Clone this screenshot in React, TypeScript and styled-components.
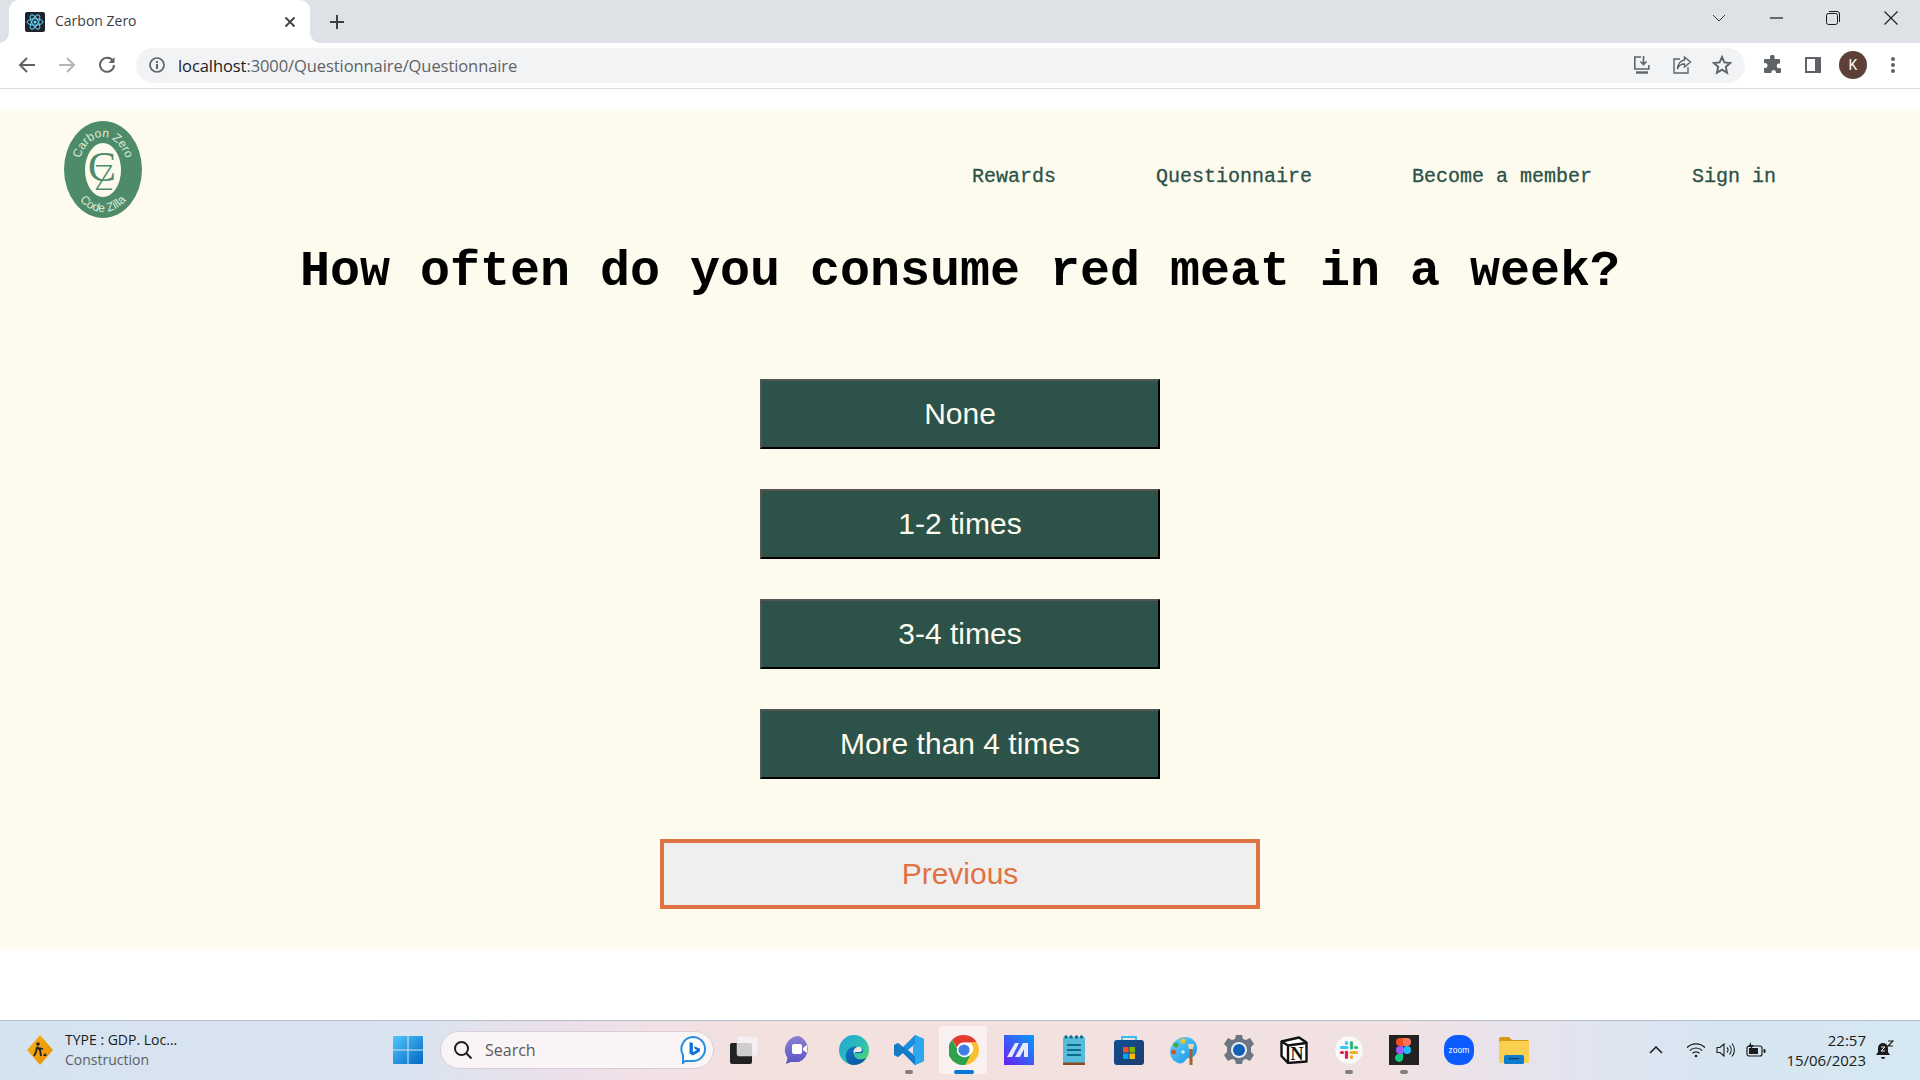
import React from "react";
import styled, { createGlobalStyle } from "styled-components";

const Global = createGlobalStyle`
  html, body { margin: 0; padding: 0; background: #fff; }
  body { font-family: "Open Sans", "Noto Sans", sans-serif; overflow: hidden; }
  * { box-sizing: border-box; }
`;

const Screen = styled.div`
  width: 1920px;
  height: 1080px;
  display: flex;
  flex-direction: column;
  background: #fff;
`;

/* ---------- browser chrome ---------- */
const TabStrip = styled.div`
  height: 43px;
  background: #dee1e6;
  display: flex;
  align-items: stretch;
  padding-left: 9px;
`;
const Tab = styled.div`
  position: relative;
  width: 301px;
  background: #fff;
  border-radius: 10px 10px 0 0;
  display: flex;
  align-items: center;
  padding: 0 14px 0 16px;
  &::before, &::after {
    content: "";
    position: absolute;
    bottom: 0;
    width: 10px;
    height: 10px;
  }
  &::before { left: -10px; background: radial-gradient(circle at 0 0, #dee1e6 9.5px, #fff 10px); }
  &::after { right: -10px; background: radial-gradient(circle at 100% 0, #dee1e6 9.5px, #fff 10px); }
`;
const TabTitle = styled.span`
  margin-left: 10px;
  padding-bottom: 2px;
  font-size: 14px;
  color: #3c4043;
  font-family: "Open Sans", sans-serif;
  flex: 1;
`;
const NewTab = styled.div`
  width: 32px;
  margin-left: 11px;
  display: flex;
  align-items: center;
  justify-content: center;
`;
const WindowControls = styled.div`
  margin-left: auto;
  display: flex;
  align-items: flex-start;
`;
const WinSlot = styled.div<{ $w: number }>`
  width: ${(p) => p.$w}px;
  height: 36px;
  display: flex;
  align-items: center;
  justify-content: center;
`;
const Toolbar = styled.div`
  height: 46px;
  background: #fff;
  border-bottom: 1px solid #dadce0;
  display: flex;
  align-items: center;
  padding: 2px 7px 3px;
`;
const ToolSlot = styled.div`
  width: 40px;
  height: 36px;
  display: flex;
  align-items: center;
  justify-content: center;
`;
const Omnibox = styled.div`
  flex: 1;
  height: 35px;
  margin: 0 8px 0 9px;
  background: #f1f3f4;
  border-radius: 18px;
  display: flex;
  align-items: center;
  padding: 0 3px 0 9px;
`;
const InfoSlot = styled.div`
  width: 24px;
  display: flex;
  justify-content: center;
`;
const Url = styled.div`
  margin-left: 9px;
  font-size: 16.5px;
  letter-spacing: -0.08px;
  color: #5f6368;
  font-family: "Open Sans", sans-serif;
  b { font-weight: 400; color: #202124; }
`;
const OmniActions = styled.div`
  margin-left: auto;
  display: flex;
`;
const Avatar = styled.div`
  width: 28px;
  height: 28px;
  border-radius: 50%;
  background: #5d4037;
  color: #fff;
  font-size: 14px;
  font-family: "Roboto", sans-serif;
  display: flex;
  align-items: center;
  justify-content: center;
`;
const Gap = styled.div<{ $h: number }>`
  height: ${(p) => p.$h}px;
  flex: none;
`;

/* ---------- page ---------- */
const Page = styled.main`
  height: 840px;
  background: #fdfbee;
  display: flex;
  flex-direction: column;
  align-items: center;
`;
const Header = styled.header`
  align-self: stretch;
  display: flex;
  justify-content: space-between;
  align-items: flex-start;
  padding: 12px 144px 0 64px;
`;
const Nav = styled.nav`
  display: flex;
  gap: 100px;
  padding-top: 44px;
`;
const NavLink = styled.a`
  font-family: "Liberation Mono", "Courier New", monospace;
  font-size: 20px;
  line-height: 24px;
  color: #2c5249;
  -webkit-text-stroke: 0.3px #2c5249;
`;
const Title = styled.h1`
  margin: 24px 0 0;
  font-family: "Liberation Mono", "Courier New", monospace;
  font-size: 50px;
  line-height: 60px;
  font-weight: 700;
  color: #000;
  text-align: center;
`;
const Options = styled.div`
  margin-top: 77px;
  display: flex;
  flex-direction: column;
  gap: 40px;
`;
const OptionButton = styled.button`
  width: 400px;
  height: 70px;
  padding: 0;
  background: #2c5249;
  color: #fdfbee;
  border: 2px outset #000;
  font-family: "Liberation Sans", Arial, sans-serif;
  font-size: 30px;
`;
const PrevButton = styled.button`
  margin-top: 60px;
  width: 600px;
  height: 70px;
  padding: 0;
  background: #efefef;
  color: #e07245;
  border: 4px solid #e07245;
  font-family: "Liberation Sans", Arial, sans-serif;
  font-size: 30px;
`;

/* ---------- taskbar ---------- */
const Taskbar = styled.footer`
  height: 60px;
  flex: none;
  border-top: 1px solid #b9bfca;
  padding-bottom: 1px;
  background: linear-gradient(90deg, #d5e3f0 0%, #dbe4f0 22%, #efdfe9 31%, #f3e1de 40%, #f2e1e2 72%, #e3e4f1 82%, #d5e6f1 90%, #d6e8f2 100%);
  display: flex;
  align-items: stretch;
`;
const Widget = styled.div`
  width: 380px;
  display: flex;
  align-items: center;
  padding: 0 0 0 26px;
`;
const WidgetText = styled.div`
  margin-left: 11px;
  padding-bottom: 1px;
  font-size: 14px;
  line-height: 20px;
  color: #1b1b1b;
  span { display: block; color: #5c5f63; }
`;
const TaskSlot = styled.div<{ $active?: boolean }>`
  position: relative;
  width: 55px;
  display: flex;
  align-items: center;
  justify-content: center;
  &::before {
    content: "";
    display: ${(p) => (p.$active ? "block" : "none")};
    position: absolute;
    left: 3px;
    right: 4px;
    top: 5px;
    bottom: 5px;
    border-radius: 4px;
    background: rgba(255, 255, 255, 0.5);
  }
  svg { position: relative; }
`;
const RunDot = styled.i<{ $active?: boolean }>`
  position: absolute;
  left: 50%;
  bottom: 5px;
  transform: translateX(-50%);
  width: ${(p) => (p.$active ? 20 : 8)}px;
  height: 4px;
  border-radius: 2px;
  background: ${(p) => (p.$active ? "#0078d4" : "#7f7f7f")};
`;
const SearchBox = styled.div`
  width: 274px;
  height: 38px;
  align-self: center;
  margin: 0 2px 0 5px;
  border-radius: 19px;
  background: #faf4f6;
  border: 1px solid #d9cfd5;
  display: flex;
  align-items: center;
  padding: 0 7px 0 12px;
  font-size: 16px;
  color: #5a5a5a;
  span { margin-left: 12px; flex: 1; }
`;
const Tray = styled.div`
  margin-left: auto;
  display: flex;
  align-items: center;
`;
const TrayIcon = styled.div`
  width: 30px;
  display: flex;
  justify-content: center;
`;
const CaretSlot = styled(TrayIcon)`
  margin-right: 10px;
`;
const Clock = styled.div`
  margin-left: 15px;
  padding-bottom: 1px;
  font-size: 15px;
  line-height: 20px;
  text-align: right;
  color: #1b1b1b;
`;
const BellSlot = styled.div`
  width: 54px;
  padding-right: 16px;
  display: flex;
  justify-content: center;
`;

/* ---------- drawings ---------- */
const Logo = () => (
  <svg width="78" height="97" viewBox="0 0 78 97">
    <defs>
      <path id="arcTop" d="M14 52 A25 36 0 0 1 64 52" />
      <path id="arcBottom" d="M6 50 A33 41 0 0 0 72 50" />
    </defs>
    <ellipse cx="39" cy="48.5" rx="39" ry="48.5" fill="#4e8c69" />
    <ellipse cx="39" cy="49" rx="18" ry="27" fill="#fdfbee" />
    <text fontFamily="Liberation Sans" fontSize="12" fill="#dcebdc">
      <textPath href="#arcTop" startOffset="50%" textAnchor="middle">Carbon Zero</textPath>
    </text>
    <text fontFamily="Liberation Sans" fontSize="12" fill="#dcebdc">
      <textPath href="#arcBottom" startOffset="50%" textAnchor="middle">Code Zilla</textPath>
    </text>
    <text x="38" y="60" textAnchor="middle" fontFamily="Liberation Serif" fontSize="42" fill="#4e8c69">C</text>
    <text x="40" y="69" textAnchor="middle" fontFamily="Inter" fontWeight="200" fontSize="34" fill="#4e8c69">Z</text>
  </svg>
);

const ReactFav = () => (
  <svg width="20" height="20" viewBox="0 0 20 20">
    <rect width="20" height="20" rx="2" fill="#20232a" />
    <g fill="none" stroke="#61dafb" strokeWidth="1">
      <ellipse cx="10" cy="10" rx="8" ry="3.2" />
      <ellipse cx="10" cy="10" rx="8" ry="3.2" transform="rotate(60 10 10)" />
      <ellipse cx="10" cy="10" rx="8" ry="3.2" transform="rotate(120 10 10)" />
    </g>
    <circle cx="10" cy="10" r="1.6" fill="#61dafb" />
  </svg>
);

const stroke = { fill: "none", stroke: "#5f6368", strokeWidth: 2 };

const Close = () => (
  <svg width="12" height="12" viewBox="0 0 12 12"><path d="M1.5 1.5l9 9M10.500 1.500l-9 9" stroke="#3c4043" strokeWidth="1.8" /></svg>
);
const Plus = () => (
  <svg width="16" height="16" viewBox="0 0 16 16"><path d="M8 1v14M1 8h14" stroke="#3c4043" strokeWidth="2" /></svg>
);
const Chevron = () => (
  <svg width="14" height="8" viewBox="0 0 14 8"><path d="M1 1l6 6 6-6" fill="none" stroke="#3c4043" strokeWidth="1" /></svg>
);
const Minimize = () => (
  <svg width="14" height="2" viewBox="0 0 14 2"><path d="M0 1h13" stroke="#1b1b1b" strokeWidth="1.2" /></svg>
);
const Restore = () => (
  <svg width="14" height="14" viewBox="0 0 14 14" fill="none" stroke="#1b1b1b" strokeWidth="1">
    <rect x="0.5" y="2.5" width="11" height="11" rx="2" />
    <path d="M3 .5h8a2.500 2.500 0 0 1 2.500 2.500v8" />
  </svg>
);
const WinClose = () => (
  <svg width="14" height="14" viewBox="0 0 14 14"><path d="M.5.5l13 13M13.500.5l-13 13" stroke="#1b1b1b" strokeWidth="1.1" /></svg>
);
const Back = () => (
  <svg width="18" height="18" viewBox="0 0 18 18"><path d="M17 9H2M9 2L2 9l7 7" fill="none" stroke="#5f6368" strokeWidth="2" /></svg>
);
const Forward = () => (
  <svg width="18" height="18" viewBox="0 0 18 18"><path d="M1 9h15M9 2l7 7-7 7" fill="none" stroke="#b4b6b9" strokeWidth="2" /></svg>
);
const Reload = () => (
  <svg width="18" height="18" viewBox="0 0 18 18">
    <path d="M15 5.200A7 7 0 1 0 16 9" {...stroke} />
    <path d="M16.500 1v6h-6z" fill="#5f6368" />
  </svg>
);
const Info = () => (
  <svg width="16" height="16" viewBox="0 0 16 16">
    <circle cx="8" cy="8" r="7" {...stroke} strokeWidth={1.7} />
    <path d="M7 7h2v5H7zM7 4h2v2H7z" fill="#5f6368" />
  </svg>
);
const Install = () => (
  <svg width="20" height="20" viewBox="0 0 20 20" fill="none" stroke="#5f6368" strokeWidth="1.6">
    <path d="M9 2H2.800v12h14V10" />
    <path d="M11.500 1v8M8.500 6.500l3 3 3-3" />
    <path d="M4 17.500h12" strokeWidth="2.4" />
  </svg>
);
const Share = () => (
  <svg width="20" height="20" viewBox="0 0 20 20" fill="none" stroke="#5f6368" strokeWidth="1.4">
    <path d="M8 4H2v14h14v-6" />
    <path d="M12.500 2l6 5-6 5V9C9 9 6.500 10.500 5.500 14c0-5 3-8.500 7-9z" />
  </svg>
);
const Star = () => (
  <svg width="20" height="20" viewBox="0 0 20 20">
    <path d="M10 2l2.400 5.400 5.800.6-4.400 3.900 1.300 5.800L10 14.700l-5.100 3 1.300-5.800L1.800 8l5.800-.6z" fill="none" stroke="#5f6368" strokeWidth="1.9" />
  </svg>
);
const Puzzle = () => (
  <svg width="20" height="20" viewBox="0 0 20 20">
    <path d="M7 1.500a2.400 2.400 0 0 1 4.600 0V4H16a1 1 0 0 1 1 1v3.600h-1a2.300 2.300 0 0 0 0 4.600h2V17a1 1 0 0 1-1 1h-4v-1a2.400 2.400 0 0 0-4.700 0v1H2a1 1 0 0 1-1-1v-4h1a2.500 2.500 0 0 0 0-5H1V5a1 1 0 0 1 1-1h5z" fill="#5f6368" />
  </svg>
);
const SidePanel = () => (
  <svg width="18" height="18" viewBox="0 0 18 18">
    <rect x="1" y="1" width="16" height="16" fill="#5f6368" />
    <rect x="3" y="3" width="8" height="12" fill="#fff" />
  </svg>
);
const Kebab = () => (
  <svg width="6" height="18" viewBox="0 0 6 18">
    <circle cx="3" cy="3" r="2" fill="#5f6368" /><circle cx="3" cy="9" r="2" fill="#5f6368" /><circle cx="3" cy="15" r="2" fill="#5f6368" />
  </svg>
);

const Construction = () => (
  <svg width="28" height="30" viewBox="0 0 28 30">
    <defs>
      <linearGradient id="wg" x1="0" y1="0" x2="1" y2="1"><stop offset="0" stopColor="#f9b213" /><stop offset="1" stopColor="#e88c06" /></linearGradient>
    </defs>
    <path d="M14 0l13 15-13 15L1 15z" fill="url(#wg)" />
    <circle cx="12" cy="9" r="1.800" fill="#222" />
    <path d="M11 12l3 3 1 6M11 12l-1 5-2 4M13 13l4 1" fill="none" stroke="#222" strokeWidth="1.800" />
    <path d="M17 21l2-3 2 3z" fill="#222" />
  </svg>
);
const Windows = () => (
  <svg width="30" height="30" viewBox="0 0 30 30">
    <defs>
      <linearGradient id="wn" x1="0" y1="0" x2="1" y2="1"><stop offset="0" stopColor="#52c6f8" /><stop offset="1" stopColor="#0068c8" /></linearGradient>
    </defs>
    <path d="M1 1h13.500v13.500H0V2a1 1 0 0 1 1-1zM15.500 1H29a1 1 0 0 1 1 1v12.500H15.500zM0 15.500h14.500V29H1a1 1 0 0 1-1-1zM15.500 15.500H30V28a1 1 0 0 1-1 1H15.500z" fill="url(#wn)" />
  </svg>
);
const SearchGlass = () => (
  <svg width="20" height="20" viewBox="0 0 20 20" fill="none" stroke="#1b1b1b" strokeWidth="2">
    <circle cx="8.500" cy="8.500" r="6.500" /><path d="M13.500 13.500l5 5" />
  </svg>
);
const Bing = () => (
  <svg width="26" height="28" viewBox="0 0 26 28">
    <path d="M13 1a12 12 0 0 1 0 24H5l-2 2v-8A12 12 0 0 1 13 1z" fill="#fff" stroke="#2a8fe0" strokeWidth="2" />
    <path d="M9.500 6l3.400 1.200v9l4-2.300-2-1-1-2.600 6 2.100v3.200l-7 4-3.400-2z" fill="#1273d6" />
  </svg>
);
const TaskView = () => (
  <svg width="30" height="30" viewBox="0 0 30 30">
    <rect x="1" y="8" width="22" height="21" rx="2" fill="#222" />
    <rect x="8" y="1" width="21" height="20" rx="2" fill="#f5f3f3" fillOpacity="0.82" stroke="#ddd" strokeWidth="0.5" />
  </svg>
);
const Teams = () => (
  <svg width="30" height="30" viewBox="0 0 30 30">
    <defs>
      <linearGradient id="tm" x1="0" y1="0" x2="0" y2="1"><stop offset="0" stopColor="#8a7fd4" /><stop offset="1" stopColor="#5a55c5" /></linearGradient>
    </defs>
    <path d="M15 1a14 14 0 0 1 0 26H7l-5 2 1.500-6A14 14 0 0 1 15 1z" fill="url(#tm)" />
    <rect x="8" y="9" width="10" height="10" rx="2" fill="#fff" />
    <path d="M19 13l4-3v8l-4-3z" fill="#fff" />
  </svg>
);
const Edge = () => (
  <svg width="30" height="30" viewBox="0 0 30 30">
    <defs>
      <linearGradient id="ed" x1="0" y1="0" x2="1" y2="1"><stop offset="0" stopColor="#1fa3dd" /><stop offset="0.55" stopColor="#2cc1b0" /><stop offset="1" stopColor="#5fdc5c" /></linearGradient>
      <linearGradient id="ed2" x1="0" y1="0" x2="1" y2="1"><stop offset="0" stopColor="#0f76c8" /><stop offset="1" stopColor="#0c4f9a" /></linearGradient>
    </defs>
    <circle cx="15" cy="15" r="15" fill="url(#ed)" />
    <path d="M15 30C7 30 5 22 8 16c3-5 10-6 15-2 2 2 1 4-1 4h-5c-2 0-3 2-1 4 2 3 7 3 11 1-2 4-7 7-12 7z" fill="url(#ed2)" />
    <path d="M15 19c-2-5 3-8 6-7 3 2 2 5 0 5h-4c-1 0-2 1-2 2z" fill="#f3e6e4" />
  </svg>
);
const VSCode = () => (
  <svg width="30" height="30" viewBox="0 0 30 30">
    <path d="M21 0l9 4v22l-9 4-12-12-5 4-4-2V10l4-2 5 4z M21 9l-7 6 7 6z" fill="#1a8fdc" fillRule="evenodd" />
    <path d="M21 0l9 4v22l-9 4z M21 9v12l-2-2v-8z" fill="#2aa7ee" fillRule="evenodd" />
    <path d="M0 10l4-2 17 13v9l-12-12-5 4-4-2z" fill="#0e6db8" opacity="0.55" />
  </svg>
);
const Chrome = () => (
  <svg width="30" height="30" viewBox="0 0 30 30">
    <circle cx="15" cy="15" r="15" fill="#fff" />
    <path d="M15 0a15 15 0 0 1 13 7.500H15a7.500 7.500 0 0 0-7 5L3 5a15 15 0 0 1 12-5z" fill="#e33b2e" />
    <path d="M28 7.500a15 15 0 0 1-11.500 22.400L22 19a7.500 7.500 0 0 0-1-11.500z" fill="#fbc02d" />
    <path d="M16.500 29.900A15 15 0 0 1 3 5l5.500 9a7.500 7.500 0 0 0 13.500 5z" fill="#2ea24a" />
    <circle cx="15" cy="15" r="7.200" fill="#fff" />
    <circle cx="15" cy="15" r="5.600" fill="#3f7fe8" />
  </svg>
);
const MApp = () => (
  <svg width="30" height="30" viewBox="0 0 30 30">
    <defs>
      <linearGradient id="ma" x1="0" y1="1" x2="1" y2="0"><stop offset="0" stopColor="#6a1ef0" /><stop offset="1" stopColor="#0a9cfa" /></linearGradient>
    </defs>
    <rect width="30" height="30" fill="url(#ma)" />
    <path d="M3 22l8-14h4l-7 14zM11 22l8-14h5v14h-4v-8l-4 8z" fill="#e8e9fb" />
  </svg>
);
const Notepad = () => (
  <svg width="24" height="30" viewBox="0 0 24 30">
    <rect x="1" y="2" width="22" height="26" rx="1.500" fill="#56bcd8" />
    <rect x="1" y="27.500" width="22" height="2.500" fill="#8a4a1c" />
    <g fill="#0d6d8f">
      <circle cx="4" cy="2" r="1.700" /><circle cx="9" cy="2" r="1.700" /><circle cx="14.500" cy="2" r="1.700" /><circle cx="19.500" cy="2" r="1.700" />
      <rect x="5" y="9" width="14" height="2" /><rect x="5" y="14" width="14" height="2" /><rect x="5" y="19" width="14" height="2" />
    </g>
  </svg>
);
const Store = () => (
  <svg width="30" height="30" viewBox="0 0 30 30">
    <defs>
      <linearGradient id="st" x1="0" y1="0" x2="1" y2="1"><stop offset="0" stopColor="#0e4f96" /><stop offset="1" stopColor="#1f3c6c" /></linearGradient>
    </defs>
    <path d="M8 5V2h14v3" fill="none" stroke="#31bdf0" strokeWidth="1.800" />
    <rect y="5" width="30" height="25" rx="3" fill="url(#st)" />
    <rect x="9" y="12" width="5.500" height="5.500" fill="#f25022" />
    <rect x="15.500" y="12" width="5.500" height="5.500" fill="#7fba00" />
    <rect x="9" y="18.500" width="5.500" height="5.500" fill="#00a4ef" />
    <rect x="15.500" y="18.500" width="5.500" height="5.500" fill="#ffb900" />
  </svg>
);
const Paint = () => (
  <svg width="30" height="30" viewBox="0 0 30 30">
    <defs>
      <linearGradient id="pt" x1="0" y1="0" x2="1" y2="1"><stop offset="0" stopColor="#6fd5f7" /><stop offset="1" stopColor="#0c8fe8" /></linearGradient>
    </defs>
    <path d="M16 2c8 0 13 6 12 13-1 6-5 8-8 8-2 0-3 1-4 3-2 3-6 3-9 1-4-2-6-6-6-10C1 9 8 2 16 2z" fill="url(#pt)" />
    <circle cx="14" cy="6" r="2.500" fill="#f3c11b" />
    <circle cx="7" cy="10" r="2.500" fill="#4aa53b" />
    <circle cx="4.500" cy="17" r="2.500" fill="#d9532a" />
    <circle cx="14" cy="17" r="1.700" fill="#dbeef7" />
    <path d="M22 13v17" stroke="#a5622a" strokeWidth="3" />
    <path d="M19 9h6l-1 5h-4z" fill="#e9d8a8" />
  </svg>
);
const Gear = () => (
  <svg width="30" height="30" viewBox="0 0 30 30">
    <path d="M12 0h6l1 4 3 1 4-2 4 6-3 3v5l3 3-4 6-4-2-3 1-1 4h-6l-1-4-3-1-4 2-4-6 3-3v-5L0 9l4-6 4 2 3-1z" fill="#6a7782" />
    <circle cx="15" cy="15" r="8" fill="#e9ecef" />
    <circle cx="15" cy="15" r="6" fill="#0f62b5" />
  </svg>
);
const Notion = () => (
  <svg width="28" height="28" viewBox="0 0 28 28">
    <path d="M1.500 5.500L19 1.500l7.500 5v19l-18.500 1.500-6.500-7z" fill="#fff" stroke="#111" strokeWidth="2.400" strokeLinejoin="round" />
    <path d="M8 9.500L26 7M8 9.500V27M1.500 5.500L8 9.500" fill="none" stroke="#111" strokeWidth="2.400" />
    <text x="17" y="23.500" textAnchor="middle" fontFamily="Liberation Serif" fontWeight="700" fontSize="18" fill="#111">N</text>
  </svg>
);
const Slack = () => (
  <svg width="30" height="30" viewBox="0 0 30 30">
    <circle cx="15" cy="15" r="14.500" fill="#faf8f8" stroke="#ddd" strokeWidth="0.7" />
    <g strokeWidth="3.200" strokeLinecap="round" fill="none">
      <path d="M7.500 12.500h5.500" stroke="#36c5f0" /><path d="M12.500 7.500v1" stroke="#36c5f0" />
      <path d="M17.500 7.500v5.500" stroke="#2eb67d" /><path d="M22.500 12.500h-1" stroke="#2eb67d" />
      <path d="M22.500 17.500h-5.500" stroke="#ecb22e" /><path d="M17.500 22.500v-1" stroke="#ecb22e" />
      <path d="M12.500 22.500v-5.500" stroke="#e01e5a" /><path d="M7.500 17.500h1" stroke="#e01e5a" />
    </g>
  </svg>
);
const Figma = () => (
  <svg width="30" height="30" viewBox="0 0 30 30">
    <rect width="30" height="30" fill="#222" />
    <path d="M14 3H11a4 4 0 0 0 0 8h3z" fill="#f24e1e" />
    <path d="M14 3h4a4 4 0 0 1 0 8h-4z" fill="#ff7262" />
    <path d="M14 11H11a4 4 0 0 0 0 8h3z" fill="#a259ff" />
    <circle cx="18" cy="15" r="4" fill="#1abcfe" />
    <path d="M11 19h3v4a4 4 0 1 1-3-4z" fill="#0acf83" />
  </svg>
);
const Zoom = () => (
  <svg width="30" height="30" viewBox="0 0 30 30">
    <rect width="30" height="30" rx="13" fill="#0b5cff" />
    <text x="15" y="18" textAnchor="middle" fontFamily="Liberation Sans" fontSize="8.500" fill="#fff">zoom</text>
  </svg>
);
const Files = () => (
  <svg width="30" height="30" viewBox="0 0 30 30">
    <path d="M0 4a2 2 0 0 1 2-2h8l3 3h15a2 2 0 0 1 2 2v3H0z" fill="#d39a13" />
    <rect y="6" width="30" height="22" rx="1.500" fill="#fbcf4f" />
    <rect x="5" y="20" width="20" height="9" rx="1.500" fill="#0f7ccb" />
    <rect x="10" y="23" width="10" height="1.200" fill="#0b3c68" />
  </svg>
);
const Caret = () => (
  <svg width="14" height="8" viewBox="0 0 14 8"><path d="M1 7l6-6 6 6" fill="none" stroke="#1b1b1b" strokeWidth="1.500" /></svg>
);
const Wifi = () => (
  <svg width="20" height="16" viewBox="0 0 20 16" fill="none" stroke="#1b1b1b" strokeWidth="1.200">
    <path d="M1 5.500a13 13 0 0 1 18 0M3.800 8.500a9 9 0 0 1 12.400 0M6.500 11.300a5 5 0 0 1 7 0" />
    <circle cx="10" cy="14" r="1.300" fill="#1b1b1b" stroke="none" />
  </svg>
);
const Volume = () => (
  <svg width="20" height="16" viewBox="0 0 20 16" fill="none" stroke="#1b1b1b" strokeWidth="1.100">
    <path d="M1 5.500h3l4-3.500v12l-4-3.500H1z" />
    <path d="M11 5.500a3.500 3.500 0 0 1 0 5M13.500 3.500a7 7 0 0 1 0 9M16 1.500a10 10 0 0 1 0 13" />
  </svg>
);
const Battery = () => (
  <svg width="20" height="16" viewBox="0 0 20 16">
    <rect x="1" y="4" width="15" height="10" rx="2" fill="none" stroke="#1b1b1b" strokeWidth="1.200" />
    <rect x="3" y="6" width="9" height="6" fill="#1b1b1b" />
    <rect x="17.500" y="7" width="2" height="4" rx="1" fill="#1b1b1b" />
    <path d="M5 0L2 5h3L4 8l4-5H5z" fill="#1b1b1b" />
  </svg>
);
const Bell = () => (
  <svg width="18" height="20" viewBox="0 0 18 20">
    <path d="M7 3a5 5 0 0 1 5 5v4l2 3H0l2-3V8a5 5 0 0 1 5-5z" fill="#1b1b1b" />
    <path d="M5 17h4a2 2 0 0 1-4 0z" fill="#1b1b1b" />
    <path d="M5 7h4l-4 4h4" fill="none" stroke="#e9eef2" strokeWidth="1" />
    <path d="M12 1h5l-5 5h5" fill="none" stroke="#1b1b1b" strokeWidth="1.200" />
  </svg>
);

const options = ["None", "1-2 times", "3-4 times", "More than 4 times"];
const navItems = ["Rewards", "Questionnaire", "Become a member", "Sign in"];

const taskIcons: { el: React.ReactNode; dot?: "run" | "active"; active?: boolean }[] = [
  { el: <TaskView /> },
  { el: <Teams /> },
  { el: <Edge /> },
  { el: <VSCode />, dot: "run" },
  { el: <Chrome />, dot: "active", active: true },
  { el: <MApp /> },
  { el: <Notepad /> },
  { el: <Store /> },
  { el: <Paint /> },
  { el: <Gear /> },
  { el: <Notion /> },
  { el: <Slack />, dot: "run" },
  { el: <Figma />, dot: "run" },
  { el: <Zoom /> },
  { el: <Files /> },
];

export default function App() {
  return (
    <Screen>
      <Global />
      <TabStrip>
        <Tab>
          <ReactFav />
          <TabTitle>Carbon Zero</TabTitle>
          <Close />
        </Tab>
        <NewTab><Plus /></NewTab>
        <WindowControls>
          <WinSlot $w={62}><Chevron /></WinSlot>
          <WinSlot $w={54}><Minimize /></WinSlot>
          <WinSlot $w={58}><Restore /></WinSlot>
          <WinSlot $w={58}><WinClose /></WinSlot>
        </WindowControls>
      </TabStrip>
      <Toolbar>
        <ToolSlot><Back /></ToolSlot>
        <ToolSlot><Forward /></ToolSlot>
        <ToolSlot><Reload /></ToolSlot>
        <Omnibox>
          <InfoSlot><Info /></InfoSlot>
          <Url><b>localhost</b>:3000/Questionnaire/Questionnaire</Url>
          <OmniActions>
            <ToolSlot><Install /></ToolSlot>
            <ToolSlot><Share /></ToolSlot>
            <ToolSlot><Star /></ToolSlot>
          </OmniActions>
        </Omnibox>
        <ToolSlot><Puzzle /></ToolSlot>
        <ToolSlot><SidePanel /></ToolSlot>
        <ToolSlot><Avatar>K</Avatar></ToolSlot>
        <ToolSlot><Kebab /></ToolSlot>
      </Toolbar>
      <Gap $h={20} />
      <Page>
        <Header>
          <Logo />
          <Nav>
            {navItems.map((n) => <NavLink key={n}>{n}</NavLink>)}
          </Nav>
        </Header>
        <Title>How often do you consume red meat in a week?</Title>
        <Options>
          {options.map((o) => <OptionButton key={o}>{o}</OptionButton>)}
        </Options>
        <PrevButton>Previous</PrevButton>
      </Page>
      <Gap $h={71} />
      <Taskbar>
        <Widget>
          <Construction />
          <WidgetText>TYPE : GDP. Loc...<span>Construction</span></WidgetText>
        </Widget>
        <TaskSlot><Windows /></TaskSlot>
        <SearchBox>
          <SearchGlass />
          <span>Search</span>
          <Bing />
        </SearchBox>
        {taskIcons.map((t, i) => (
          <TaskSlot key={i} $active={t.active}>
            {t.el}
            {t.dot && <RunDot $active={t.dot === "active"} />}
          </TaskSlot>
        ))}
        <Tray>
          <CaretSlot><Caret /></CaretSlot>
          <TrayIcon><Wifi /></TrayIcon>
          <TrayIcon><Volume /></TrayIcon>
          <TrayIcon><Battery /></TrayIcon>
          <Clock>22:57<br />15/06/2023</Clock>
          <BellSlot><Bell /></BellSlot>
        </Tray>
      </Taskbar>
    </Screen>
  );
}
